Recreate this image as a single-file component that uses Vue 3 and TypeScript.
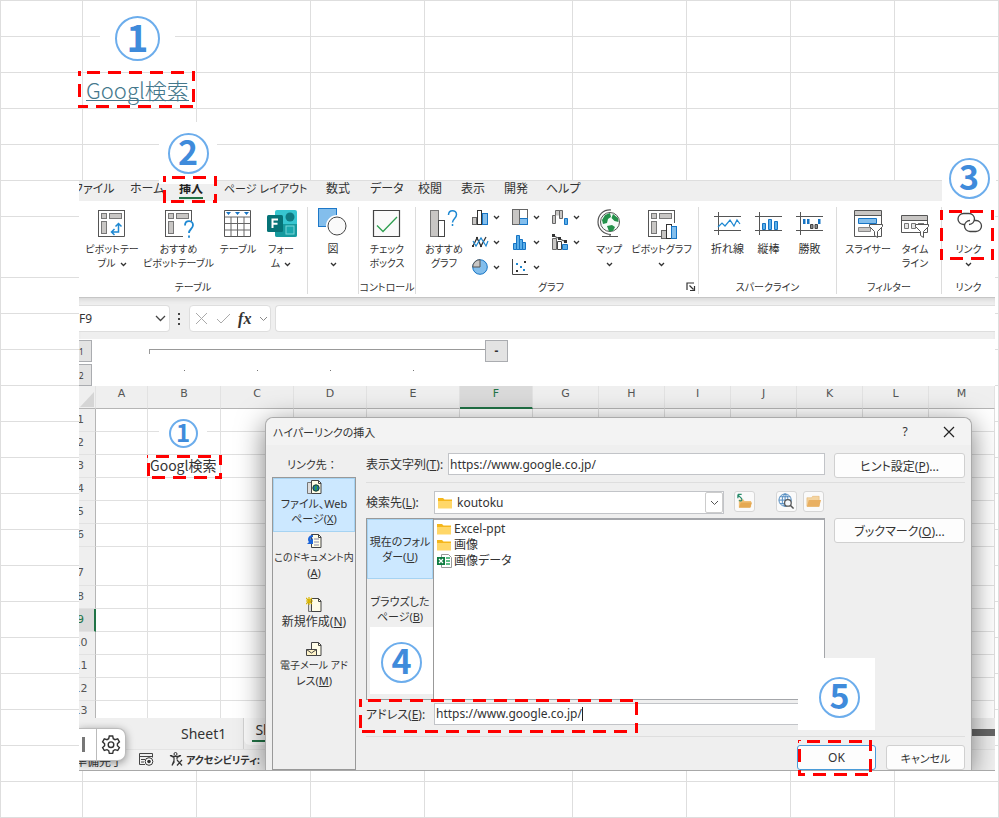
<script setup lang="ts">
import { ref } from 'vue'

interface RibbonItem { icon: string; lines: string[]; chevron?: 'inline' | 'below'; tight?: boolean }
interface Mark { n?: string; size?: number; box: Record<string, string>; kind: 'dash' | 'number' }

const tabs = ['ファイル', 'ホーム', '挿入', 'ページ レイアウト', '数式', 'データ', '校閲', '表示', '開発', 'ヘルプ']
const tableItems: RibbonItem[] = [
  { icon: 'pivot', lines: ['ピボットテー', 'ブル'], chevron: 'inline', tight: true },
  { icon: 'recPivot', lines: ['おすすめ', 'ピボットテーブル'], tight: true },
  { icon: 'table', lines: ['テーブル'], tight: true },
  { icon: 'forms', lines: ['フォー', 'ム'], chevron: 'inline', tight: true },
]
const miniCharts = ['column', 'tree', 'waterfall', 'line', 'histogram', 'combo', 'pie', 'scatter']
const sparkItems: RibbonItem[] = [
  { icon: 'sparkLine', lines: ['折れ線'] },
  { icon: 'sparkBar', lines: ['縦棒'] },
  { icon: 'sparkWin', lines: ['勝敗'] },
]
const filterItems: RibbonItem[] = [
  { icon: 'slicer', lines: ['スライサー'], tight: true },
  { icon: 'timeline', lines: ['タイム', 'ライン'], tight: true },
]
const groups: { key: string; title: string; items: RibbonItem[] }[] = [
  { key: 'tables', title: 'テーブル', items: tableItems },
  { key: 'shapes', title: '', items: [{ icon: 'shapes', lines: ['図'], chevron: 'below' }] },
  { key: 'controls', title: 'コントロール', items: [{ icon: 'check', lines: ['チェック', 'ボックス'], tight: true }] },
  { key: 'charts', title: 'グラフ', items: [{ icon: 'recChart', lines: ['おすすめ', 'グラフ'], tight: true }] },
  { key: 'sparks', title: 'スパークライン', items: sparkItems },
  { key: 'filters', title: 'フィルター', items: filterItems },
  { key: 'links', title: 'リンク', items: [{ icon: 'link', lines: ['リンク'], chevron: 'below', tight: true }] },
]
const mapItems: RibbonItem[] = [
  { icon: 'globe', lines: ['マップ'], chevron: 'below' },
  { icon: 'pivotChart', lines: ['ピボットグラフ'], chevron: 'below' },
]

const columns = ['A', 'B', 'C', 'D', 'E', 'F', 'G', 'H', 'I', 'J', 'K', 'L', 'M']
const rows = [1, 2, 3, 4, 5, 6, 7, 8, 9, 10, 11, 12, 13]
const linkTo = [
  { icon: 'docWeb', a: 'ファイル、Web', b: 'ページ', key: 'X' },
  { icon: 'docHere', a: 'このドキュメント内', b: '', key: 'A' },
  { icon: 'docNew', a: '', b: '新規作成', key: 'N' },
  { icon: 'docMail', a: '電子メール アド', b: 'レス', key: 'M' },
]
const files = [
  { icon: 'folder', name: 'Excel-ppt' },
  { icon: 'folder', name: '画像' },
  { icon: 'excel', name: '画像データ' },
]
const cellRef = ref('F9')
const formula = ref('')
const display = ref('https://www.google.co.jp/')
const address = ref('https://www.google.co.jp/')

const px = (o: Record<string, number>) => Object.fromEntries(Object.entries(o).map(([k, v]) => [k, `${v}px`]))
const marks: Mark[] = [
  { kind: 'number', n: '1', size: 44, box: px({ left: 100, top: 15, width: 75, height: 47 }) },
  { kind: 'dash', box: px({ left: 78, top: 71, width: 117, height: 37 }) },
  { kind: 'number', n: '2', size: 41, box: px({ left: 159, top: 122, width: 58, height: 62 }) },
  { kind: 'dash', box: px({ left: 163, top: 176, width: 54, height: 27 }) },
  { kind: 'number', n: '3', size: 41, box: px({ right: 3, top: 152, width: 54, height: 52 }) },
  { kind: 'dash', box: px({ right: 5, top: 210, width: 54, height: 50 }) },
  { kind: 'number', n: '1', size: 29, box: px({ left: 159, top: 418, width: 48, height: 31 }) },
  { kind: 'dash', box: px({ left: 147, top: 455, width: 75, height: 24 }) },
  { kind: 'number', n: '4', size: 41, box: px({ left: 370, top: 627, width: 63, height: 67, paddingTop: 3 }) },
  { kind: 'dash', box: px({ left: 359, top: 699, width: 279, height: 34 }) },
  { kind: 'number', n: '5', size: 41, box: px({ right: 124, top: 658, width: 77, height: 72, paddingTop: 6, paddingLeft: 6 }) },
  { kind: 'dash', box: px({ right: 127, top: 740, width: 74, height: 36 }) },
]

const frame = '<rect x=".5" y=".5" width="26" height="26" fill="#fff" stroke="#555"/><rect x="3.500" y="3.500" width="5" height="5" fill="#c8c6c4" stroke="#777"/><rect x="11.500" y="3.500" width="12" height="5" fill="#c8c6c4" stroke="#777"/><rect x="3.500" y="11.500" width="5" height="12" fill="#c8c6c4" stroke="#777"/>'
const question = '<path d="M20 15.500c0-6 8-5.500 8-.5 0 4-4 4-4 8M24 25.500v2.200" fill="none" stroke="#1e88d2" stroke-width="1.800"/>'
const funnel = (x: number, y: number) => `<path transform="translate(${x} ${y})" d="M.5.5h13v2l-5 5v6l-3-2v-4l-5-5z" fill="#fff" stroke="#555"/>`
const page = '<path d="M5.500 1.500h7l2.500 2.500v10.500h-9.500z" fill="#fffde8" stroke="#444"/><path d="M12.500 1.500v3H15" fill="none" stroke="#444"/>'
const icons: Record<string, string> = {
  pivot: frame + '<path d="M12 12h15v15H12z" fill="#fff"/><path d="M26.500 9v17.500H9" fill="none" stroke="#555"/><path d="M14 22h6.500v-8M16.500 19l-3 3 3 3M17.500 16.500l3-3 3 3" fill="none" stroke="#1e88d2" stroke-width="1.500"/>',
  recPivot: frame + '<path d="M18 11h10v17H18z" fill="#fff"/>' + question,
  table: '<path d="M.5.5h26v26H.5z" fill="#fff" stroke="#555"/><path d="M.5 7h26M.5 13.500h26M.5 20h26M7 7v19.500M13.500 7v19.500M20 7v19.500" stroke="#666"/><path d="M2 2h5L4.500 5zM11 2h5l-2.500 3zM20 2h5l-2.500 3z" fill="#1674c4"/>',
  forms: '<rect x="8" y="0" width="22" height="27" rx="2" fill="#37c6d0"/><path d="M8 14h22v11a2 2 0 0 1-2 2H10a2 2 0 0 1-2-2z" fill="#169a9e"/><circle cx="23" cy="7" r="4.500" fill="#107c83"/><rect x="19" y="16" width="8" height="8" fill="#1aa8ae" stroke="#78d5d8"/><rect x="0" y="5" width="16" height="17" rx="1.500" fill="#067377"/><path d="M5.500 18V9.500h5.500M5.500 13.700h5" fill="none" stroke="#fff" stroke-width="2"/>',
  shapes: '<rect x="-.5" y="-1.500" width="18" height="18" fill="#83beec" stroke="#1e78c8"/><circle cx="18" cy="16" r="9.500" fill="#fff" stroke="#fff" stroke-width="3"/><circle cx="18" cy="16" r="9" fill="#fafafa" stroke="#444"/>',
  check: '<path d="M.5.5h26v26H.5z" fill="#fafafa" stroke="#444" stroke-width="1.200"/><path d="M4 15.500l6 6L24 7" fill="none" stroke="#2e9e4f" stroke-width="1.300"/>',
  recChart: '<rect x=".5" y=".5" width="8" height="26" fill="#c8c6c4" stroke="#777"/><rect x="8.500" y="10.500" width="6" height="16" fill="#fff" stroke="#444"/><path d="M18.500 5c0-6 8-5.500 8-.5 0 4-4 4.500-4 8M22.500 14v2" fill="none" stroke="#1e88d2" stroke-width="1.500"/>',
  globe: '<circle cx="15" cy="12" r="9.500" fill="#f5fbf8" stroke="#555"/><path d="M10 5l5-2 1 4-3 2-1 4-4 1-1-4zM18 4l5 4 .5 4-4-1-3-3zM12 16l5-1 3 2-2 4-4 .5z" fill="#23914a"/><path d="M16 0C8-.5 3 5 3 12s6 12.500 13 12.500M15 24v2.500M7 26.500h16" fill="none" stroke="#555" stroke-width="1.200"/>',
  pivotChart: frame + '<path d="M13 13h15v16H13z" fill="#fff"/><rect x="13.500" y="20.500" width="5" height="8" fill="#c8c6c4" stroke="#666"/><rect x="18.500" y="14.500" width="5" height="14" fill="#fff" stroke="#333"/><rect x="23.500" y="16.500" width="5" height="12" fill="#83beec" stroke="#1674c4"/>',
  sparkLine: '<path d="M0 6.500h27M0 20.500h27M4.500 2v23" stroke="#555"/><path d="M4 17l4-4 3 3 5-6 4 6 3-6 3 4" fill="none" stroke="#1e88d2" stroke-width="1.200"/>',
  sparkBar: '<path d="M0 6.500h27M0 20.500h27M4.500 2v23" stroke="#555"/><path d="M7.500 13.500h3v6h-3zM13.500 9.500h3v10h-3zM19.500 11.500h3v8h-3z" fill="#5aaee8" stroke="#1674c4"/>',
  sparkWin: '<path d="M0 6.500h27M0 20.500h27M4.500 2v23" stroke="#555"/><path d="M7 9h2.500v5H7zM11 9h2.500v5H11zM22 9h2.500v5H22z" fill="#1674c4"/><path d="M14.500 14.500h2.500v4h-2.500zM19 14.500h2.500v4H19z" fill="#888" stroke="#444"/>',
  slicer: '<path d="M.5.500h27v26H.5z" fill="#fff" stroke="#555"/><path d="M1 1h26v5H1z" fill="#c8c6c4"/><path d="M.5 5.500h27" stroke="#555"/><path d="M4.500 8.500h18v5h-18z" fill="#83beec" stroke="#1674c4"/><path d="M4.500 17.500h12v4h-12z" fill="#c8c6c4" stroke="#888"/>' + funnel(15, 14),
  timeline: '<path d="M.5 5.500h26v17H.5z" fill="#fff" stroke="#555"/><path d="M1 6h25v4H1z" fill="#c8c6c4"/><path d="M.5 10.500h26" stroke="#555"/><path d="M3.500 13.500h4v5h-4zM10.500 13.500h4v5h-4z" fill="#e6e6e6" stroke="#777"/><path d="M17 13.500h6" stroke="#777"/>' + funnel(14, 14),
  link: '<path d="M9.500 14.500H8.500a5.500 5.500 0 0 1 0-11h5.500a5.500 5.500 0 0 1 0 11M18.500 10.500h2.500a5.500 5.500 0 0 1 0 11h-6a5.500 5.500 0 0 1 0-11" fill="none" stroke="#444" stroke-width="1.300"/>',
  column: '<rect x=".5" y="8.500" width="4" height="7" fill="#c8c6c4" stroke="#666"/><rect x="5.500" y="1.500" width="4" height="14" fill="#fff" stroke="#333"/><rect x="10.500" y="4.500" width="5" height="11" fill="#83beec" stroke="#1674c4"/>',
  tree: '<rect x=".5" y=".5" width="15" height="15" fill="#fff" stroke="#666"/><path d="M1 1h6v14H1z" fill="#c8c6c4"/><path d="M7.500 9.500h8v6h-8z" fill="#83beec" stroke="#1674c4"/><path d="M7.500 1v14" stroke="#666"/>',
  waterfall: '<path d="M.5 14.500v-8h3v8zM3.500 6.500v-5h4v5M7.500 1.500h3v8h-3z" fill="#c8c6c4" stroke="#666"/><path d="M12.500 9.500h3v6h-3z" fill="#5aaee8" stroke="#1674c4"/>',
  line: '<path d="M1 12l4-8 4 8 5-9" fill="none" stroke="#333" stroke-width="1.300"/><path d="M1 7l3 5 5-8 5 8 2-5" fill="none" stroke="#1e88d2" stroke-width="1.200"/><path d="M4 3h2v2H4zM0 11h2v2H0zM8 11h2v2H8z" fill="#333"/>',
  histogram: '<path d="M1.500 15.500v-6h3v6zM4.500 15.500v-14h3v14zM7.500 15.500V5.500h3v10zM10.500 15.500v-7h3v7z" fill="#5aaee8" stroke="#1674c4"/>',
  combo: '<path d="M.5 15.500V4.500h4v11z" fill="#c8c6c4" stroke="#666"/><path d="M5.500 15.500v-8h4v8z" fill="#fff" stroke="#444"/><path d="M10.500 15.500v-5h5v5z" fill="#5aaee8" stroke="#1674c4"/><path d="M1 1.500l12 6" stroke="#333"/><path d="M0 0h3v3H0zM6 3h3v3H6zM12 6h3v3h-3z" fill="#333"/>',
  pie: '<circle cx="8" cy="8" r="7.300" fill="#83beec" stroke="#1674c4"/><path d="M8 8V.7A7.300 7.300 0 0 0 .7 8z" fill="#c8c6c4" stroke="#555"/>',
  scatter: '<path d="M.5 0v15.500H16" fill="none" stroke="#444"/><path d="M4 4h2v2H4zM8 7h2v2H8zM11 10h2v2h-2z" fill="#1e88d2"/><path d="M12 2h2v2h-2zM4 11h2v2H4z" fill="#333"/>',
  docWeb: '<path d="M1.500 3.500h4v11h-4z" fill="#ddd" stroke="#777"/>' + page + '<circle cx="10" cy="9" r="3.200" fill="#1b6fb5" stroke="#17431c"/><path d="M9 7h2v4H9z" fill="#2e9e4f"/>',
  docHere: page + '<path d="M8 6h5M8 9h5M8 12h5" stroke="#88a"/><path d="M7 2C2 2 1 7 3 9L1 11h6V5L5 7C4 6 5 4 7 4z" fill="#1c64d8"/>',
  docNew: '<path d="M2.500 4.500h4v10h-4z" fill="#ddd" stroke="#777"/>' + page + '<path d="M3 0v8M-1 4h8M0 1l6 6M6 1L0 7" stroke="#d8b400" stroke-width="1.200"/>',
  docMail: page + '<path d="M.5 8.500h10v6H.5z" fill="#fff4c8" stroke="#444"/><path d="M.5 8.500l5 3.500 5-3.500" fill="none" stroke="#444"/>',
  folder: '<path d="M1 3h5l1.500 1.500H15V13H1z" fill="#f5b71c"/><path d="M1 6h14v7.500H1z" fill="#ffd768"/>',
  excel: '<path d="M5.500 1.500h7l3 3v10h-10z" fill="#fff" stroke="#999"/><path d="M10 5h4M10 8h4M10 11h4" stroke="#5fbf88" stroke-width="2"/><rect x="1" y="4" width="8" height="8" fill="#107c41"/><path d="M3 6l4 4M7 6l-4 4" stroke="#fff" stroke-width="1.300"/>',
  up: '<path d="M3 7h5l1 1.500h7V15H3z" fill="#f0c078"/><path d="M5 10h12l-2 5.500H3z" fill="#e5a952"/><path d="M2 1.500h4M2 1.500v4M2 2l4 4c1 2-1 3-3 2" fill="none" stroke="#2a8c6c" stroke-width="1.300"/>',
  web: '<circle cx="7.500" cy="7.500" r="6.500" fill="#fff" stroke="#4a86bd"/><path d="M1 7.500h13M7.500 1v13M2 4h11M2 11h11" stroke="#4a86bd"/><ellipse cx="7.500" cy="7.500" rx="3" ry="6.500" fill="none" stroke="#4a86bd"/><circle cx="10.500" cy="10.500" r="3.500" fill="#f4f8fc" stroke="#555" stroke-width="1.300"/><path d="M13 13l3.500 3.500" stroke="#555" stroke-width="1.600"/>',
  open: '<path d="M2 5h5l1-1.500h7V14H2z" fill="#f4d4a0" stroke="#e0ad60" stroke-width=".5"/><path d="M4 7.500h13L15 14.500H2z" fill="#e9b062"/>',
  gear: '<path d="M8.300 1h3.400l.6 2.700 1.700 1 2.700-.8 1.700 2.900-2 1.900v2l2 1.900-1.700 2.900-2.700-.8-1.700 1-.6 2.700H8.300l-.6-2.700-1.700-1-2.700.8-1.700-2.900 2-1.900v-2l-2-1.900 1.700-2.900 2.700.8 1.700-1z" fill="#fff" stroke="#333" stroke-width="1.400"/><circle cx="10" cy="9.700" r="2.800" fill="none" stroke="#333" stroke-width="1.400"/>',
  macro: '<path d="M6 12.500H.5V1.500h13v4M.5 4.500h13M2 7.500h4M2 10h3" fill="none" stroke="#444"/><circle cx="10" cy="9.500" r="3.800" fill="#fff" stroke="#333"/><circle cx="10" cy="9.500" r="1.800" fill="#333"/>',
  access: '<circle cx="6.500" cy="2" r="1.500" fill="none" stroke="#333"/><path d="M1 3.500l4 2v3l-2 5M12 3.500l-4 2v2M3 13.500l2.500-4M8 8l5 5.500M13 8l-5 5.500M1 3.500l4.500 1h2l4.500-1" fill="none" stroke="#333" stroke-width="1.200"/>',
}
</script>

<template>
  <main class="canvas">
    <div class="backdrop">
      <div v-for="r in 22" :key="r" class="line" :class="{ tall: r === 7 }">
        <div v-for="c in 9" :key="c" class="box">
          <a v-if="r === 3 && c === 2" class="cell-link" href="https://www.google.co.jp/">Googl検索</a>
        </div>
      </div>
    </div>

    <section class="excel">
      <nav class="tabs">
        <a v-for="(t, i) in tabs" :key="t" href="#" :class="{ first: i === 0, on: t === '挿入', tight: i === 3 }">{{ t }}</a>
      </nav>

      <div class="ribbon">
        <div v-for="g in groups" :key="g.key" class="group" :class="g.key">
          <div class="items">
            <button v-for="it in g.items" :key="it.icon" type="button" class="big" :class="{ tight: it.tight }">
              <svg width="30" height="30" viewBox="-1 0 30 30" v-html="icons[it.icon]" />
              <span v-for="(l, i) in it.lines" :key="l" class="cap">{{ l }}<svg v-if="it.chevron === 'inline' && i === it.lines.length - 1" class="chev after" width="7" height="5" viewBox="0 0 7 5"><path d="M1 1l2.500 2.500L6 1" /></svg></span>
              <span v-if="it.chevron === 'below'" class="cap"><svg class="chev" width="7" height="5" viewBox="0 0 7 5"><path d="M1 1l2.500 2.500L6 1" /></svg></span>
            </button>
            <div v-if="g.key === 'charts'" class="minis">
              <button v-for="m in miniCharts" :key="m" type="button" class="mini" :aria-label="m">
                <svg width="17" height="17" viewBox="0 0 17 17" v-html="icons[m]" />
                <svg class="chev after" width="7" height="5" viewBox="0 0 7 5"><path d="M1 1l2.500 2.500L6 1" /></svg>
              </button>
            </div>
            <template v-if="g.key === 'charts'">
              <button v-for="it in mapItems" :key="it.icon" type="button" class="big tight">
                <svg width="30" height="30" viewBox="-1 0 30 30" v-html="icons[it.icon]" />
                <span class="cap">{{ it.lines[0] }}</span>
                <span class="cap"><svg class="chev" width="7" height="5" viewBox="0 0 7 5"><path d="M1 1l2.500 2.500L6 1" /></svg></span>
              </button>
            </template>
          </div>
          <div class="title tight">
            <span>{{ g.title }}</span>
            <svg v-if="g.key === 'charts'" width="10" height="10" viewBox="0 0 10 10"><path d="M1 8V1h7M3.500 3.500l4 4M8.500 4v4.500H4" fill="none" stroke="#333" stroke-width="1.200" /></svg>
          </div>
        </div>
      </div>

      <div class="formula">
        <label class="name"><input v-model="cellRef" aria-label="名前ボックス"><svg width="11" height="7" viewBox="0 0 11 7"><path d="M1 1l4.500 4.500L10 1" fill="none" stroke="#444" stroke-width="1.300" /></svg></label>
        <svg class="dots" width="4" height="14" viewBox="0 0 4 14"><path d="M1 1h2v2H1zM1 6h2v2H1zM1 11h2v2H1z" fill="#444" /></svg>
        <div class="fx">
          <svg width="13" height="13" viewBox="0 0 13 13"><path d="M1 1l11 11M12 1L1 12" stroke="#aaa" /></svg>
          <svg width="15" height="11" viewBox="0 0 15 11"><path d="M1 6l4 4L14 1" fill="none" stroke="#aaa" /></svg>
          <i>fx</i>
          <svg width="9" height="6" viewBox="0 0 9 6"><path d="M1 1l3.500 3.500L8 1" fill="none" stroke="#888" /></svg>
        </div>
        <input v-model="formula" class="bar" aria-label="数式バー">
      </div>

      <div class="outline">
        <div class="levels"><button type="button">1</button><button type="button">2</button></div>
        <div class="bracket"><div class="rule" /><div class="points"><i /><i /><i /><i /></div></div>
        <button type="button" class="minus">-</button>
      </div>

      <table class="sheet">
        <colgroup><col class="c0"><col v-for="c in columns" :key="c" :class="'c' + c"></colgroup>
        <thead>
          <tr><th class="corner"><svg width="15" height="17" viewBox="0 0 15 17"><path d="M14 1v15H0z" fill="#d5d5d5" /></svg></th><th v-for="c in columns" :key="c" :class="{ on: c === 'F' }">{{ c }}</th></tr>
        </thead>
        <tbody>
          <tr v-for="r in rows" :key="r" :class="{ high: r === 7, cut: r === 13 }">
            <th :class="{ on: r === 9 }"><div class="num"><span>{{ r }}</span></div></th>
            <td v-for="c in columns" :key="c">{{ r === 3 && c === 'B' ? 'Googl検索' : '' }}</td>
          </tr>
        </tbody>
      </table>

      <div class="sheets">
        <button type="button" class="plain">Sheet1</button>
        <button type="button" class="active"><span>Sheet2</span></button>
        <div class="scroll"><div /></div>
      </div>
      <footer class="status">
        <span class="ready">準備完了</span>
        <svg width="15" height="15" viewBox="0 0 15 15" v-html="icons.macro" />
        <svg class="acc" width="14" height="15" viewBox="0 0 14 15" v-html="icons.access" />
        <b class="tight">アクセシビリティ:</b>
      </footer>
      <div class="float"><span /><button type="button" aria-label="設定"><svg width="20" height="20" viewBox="0 0 20 20" v-html="icons.gear" /></button></div>

      <form class="dialog" @submit.prevent>
        <header>
          <span class="compact">ハイパーリンクの挿入</span>
          <button type="button">?</button>
          <button type="button" aria-label="閉じる"><svg width="12" height="12" viewBox="0 0 12 12"><path d="M1 1l10 10M11 1L1 11" stroke="#222" stroke-width="1.200" /></svg></button>
        </header>
        <div class="body">
          <div class="left">
            <span class="heading compact">リンク先 ：</span>
            <div class="targets">
              <button v-for="(l, i) in linkTo" :key="l.key" type="button" :class="{ on: i === 0, long: i === 1, short: i === 2 }">
                <svg width="17" height="17" viewBox="0 0 17 17" v-html="icons[l.icon]" />
                <span v-if="l.a" :class="i === 0 ? 'compact' : 'tight'">{{ l.a }}</span>
                <span :class="{ compact: i !== 2 }">{{ l.b }}(<u>{{ l.key }}</u>)</span>
              </button>
            </div>
          </div>
          <div class="main">
            <div class="row">
              <label class="wide" for="disp">表示文字列(<u>T</u>):</label>
              <input id="disp" v-model="display" class="text">
              <button type="button" class="push">ヒント設定(<u>P</u>)...</button>
            </div>
            <hr>
            <div class="row look">
              <label for="look">検索先(<u>L</u>):</label>
              <div class="combo">
                <svg width="16" height="16" viewBox="0 0 16 16" v-html="icons.folder" />
                <select id="look"><option>koutoku</option></select>
                <span><svg width="9" height="6" viewBox="0 0 9 6"><path d="M1 1l3.500 3.500L8 1" fill="none" stroke="#555" /></svg></span>
              </div>
              <button v-for="b in ['up', 'web', 'open']" :key="b" type="button" class="tool" :class="b" :aria-label="b"><svg width="17" height="17" viewBox="0 0 18 18" v-html="icons[b]" /></button>
            </div>
            <div class="row browse">
              <div class="places compact">
                <button type="button" class="on">現在のフォル<br>ダー(<u>U</u>)</button>
                <button type="button">ブラウズした<br>ページ(<u>B</u>)</button>
              </div>
              <ul>
                <li v-for="f in files" :key="f.name"><svg width="16" height="16" viewBox="0 0 16 16" v-html="icons[f.icon]" />{{ f.name }}</li>
              </ul>
              <button type="button" class="push">ブックマーク(<u>O</u>)...</button>
            </div>
            <div class="row addr">
              <label for="addr">アドレス(<u>E</u>):</label>
              <div class="text"><input id="addr" v-model="address"><i /></div>
            </div>
            <hr class="low">
            <div class="row actions">
              <button type="submit" class="push ok">OK</button>
              <button type="button" class="push cancel compact">キャンセル</button>
            </div>
          </div>
        </div>
      </form>
    </section>

    <template v-for="(m, i) in marks" :key="i">
      <div v-if="m.kind === 'number'" class="patch" :style="m.box"><span class="num" :class="'s' + m.size">{{ m.n }}</span></div>
      <svg v-else class="dash" :style="m.box"><rect width="100%" height="100%" /></svg>
    </template>
  </main>
</template>

<style>
body { margin: 0; background: #fff; }
</style>

<style scoped>
* { box-sizing: border-box; }
.canvas { position: relative; display: grid; font-family: "Noto Sans", "Noto Sans CJK JP", sans-serif; font-size: 12px; color: #333; font-feature-settings: "palt"; overflow: hidden; }
button, input, select { font: inherit; font-feature-settings: inherit; color: inherit; margin: 0; padding: 0; border: 0; background: none; border-radius: 0; outline: none; min-width: 0; }
a { color: inherit; text-decoration: none; }
svg { flex: none; }
.backdrop, .excel { grid-area: 1 / 1; }
.backdrop { border: solid #dedede; border-width: 1px 0 0 1px; }
.line { display: grid; grid-template-columns: 82px 114fr 114fr 114fr 148fr 114fr 104fr 104fr 104fr; height: 36px; }
.line.tall { height: 61px; }
.box { border: solid #dedede; border-width: 0 1px 1px 0; display: flex; align-items: flex-start; padding: 4px 0 0 3px; white-space: nowrap; }
.cell-link { font: 22px/24px "Noto Sans CJK JP", sans-serif; font-weight: 300; color: #44788c; border-bottom: 1px solid #44788c; height: 24px; }

.excel { position: relative; margin: 181px 4px 47px 79px; background: #fff; height: 590px; overflow: hidden; border-bottom: 1px solid #a8a8a8; }
.tabs { height: 20px; background: #efefef; display: grid; grid-template-columns: 51px 49px 45px 102px 44px 48px 43px 43px 42px 60px; line-height: 15px; white-space: nowrap; }
.compact, .tabs .tight { font-size: 11px; }
.tabs .first { margin-left: -6px; }
.tabs .on { font-weight: 700; color: #222; border-bottom: 2px solid #217346; justify-self: start; height: 18px; }

.ribbon { height: 96px; display: grid; grid-template-columns: 229fr 51fr 57fr 283fr 138fr 105fr 53fr; background: #fff; font-size: 11px; }
.tight { font-size: 10px; }
.group { position: relative; border-right: 1px solid #dcdcdc; margin: 6px 0 3px; display: flex; flex-direction: column; min-width: 0; }
.group.links { border: 0; }
.items { flex: 1; padding-top: 3px; display: grid; grid-template-columns: 1fr; }
.tables .items { grid-template-columns: 66px 67px 52px 34px; }
.charts .items { grid-template-columns: 56px 120px 34px 71px; }
.sparks .items { grid-template-columns: 41px 41px 41px; padding-left: 8px; }
.filters .items { grid-template-columns: 62px 32px; }
.big { display: flex; flex-direction: column; align-items: center; white-space: nowrap; }
.big > svg { margin-bottom: 2px; overflow: visible; }
.cap { line-height: 14px; height: 14px; }
.chev { vertical-align: middle; fill: none; stroke: #333; stroke-width: 1.3; }
.chev.after { margin-left: 4px; }
.title { height: 14px; line-height: 14px; display: flex; align-items: center; justify-content: center; white-space: nowrap; }
.title span { flex: 1; display: flex; justify-content: center; }
.charts .title svg { margin-right: 2px; }
.minis { display: grid; grid-template-columns: repeat(3, 40px); grid-auto-rows: 25px; margin-top: -5px; }
.mini { display: flex; align-items: center; }

.formula { height: 42px; background: #efefef; padding: 7px 0 7px; display: flex; border-top: 1px solid #c6c6c6; box-shadow: inset 0 4px 4px -2px #d8d8d8; }
.name, .fx, .bar { background: #fff; border: 1px solid #dedede; border-radius: 4px; height: 27px; }
.name { width: 91px; display: flex; align-items: center; justify-content: space-between; padding-right: 3px; border-left: 0; border-radius: 0 4px 4px 0; }
.name input { width: 60px; }
.dots { margin: 7px 8px 0 7px; }
.fx { width: 82px; display: flex; align-items: center; justify-content: space-between; padding: 0 2px 0 5px; }
.fx i { font: italic bold 16px "Liberation Serif", serif; }
.bar { flex: 1; margin-left: 4px; border-right: 0; border-radius: 4px 0 0 4px; }

.outline { height: 47px; display: flex; background: #fff; align-items: flex-start; padding-top: 1px; }
.levels { width: 13px; display: grid; gap: 2px; }
.levels button { height: 22px; width: 13px; border: 1px solid #aaacb0; border-left: 0; background: #e3e3e3; font-size: 8px; text-align: left; }
.bracket { width: 336px; margin: 9px 0 0 57px; }
.rule { height: 5px; border: solid #999; border-width: 1px 0 0 1px; }
.points { display: flex; gap: 72px; padding: 16px 0 0 35px; }
.points i { width: 1px; height: 1px; background: #777; }
.points i:last-child { margin-left: 10px; }
.minus { width: 23px; height: 22px; background: #e3e3e3; border: 1px solid #aaacb0; font-weight: 700; line-height: 18px; }

.sheet { width: 100%; table-layout: fixed; border-collapse: separate; border-spacing: 0; }
.c0 { width: 17px; } .cA { width: 52px; } .cB, .cC, .cD, .cF { width: 73px; } .cE { width: 93px; }
.sheet th, .sheet td { padding: 0; border: solid #e0e0e0; border-width: 0 1px 1px 0; height: 23px; font-weight: 400; white-space: nowrap; line-height: 16px; overflow: hidden; }
.sheet td { font: 14px/18px "Noto Sans CJK JP", sans-serif; padding: 0 0 2px 2px; }
.sheet th { background: #efefef; color: #555; border-color: #e2e2e2; font-family: "DejaVu Sans", sans-serif; font-size: 11px; }
.sheet thead th { border-bottom-color: #b5b5b5; padding-bottom: 6px; }
.sheet thead th.on { background: #dadada; color: #217346; border-bottom: 2px solid #217346; padding-bottom: 5px; }
.sheet .corner { text-align: right; vertical-align: bottom; padding: 0; line-height: 0; }
.sheet tbody th { border-right-color: #b5b5b5; }
.sheet tbody th.on { background: #dadada; color: #217346; border-right: 2px solid #217346; }
.sheet .num { display: flex; justify-content: center; width: 31px; margin-left: -14px; }
.sheet .high > * { height: 39px; }
.sheet .high th { vertical-align: bottom; padding-bottom: 4px; }
.sheet .cut > * { height: 17px; border-bottom: 0; }
.sheet .cut .num { height: 14px; }

.sheets { height: 31px; display: flex; background: #efefef; }
.plain { width: 165px; padding-left: 102px; text-align: left; font-size: 14px; border-right: 1px solid #d2d2d2; }
.active { width: 60px; padding: 0 0 2px 8px; background: #fafafa; border-radius: 0 0 6px 6px; font-size: 14px; height: 27px; }
.active span { display: block; border-bottom: 2px solid #217346; line-height: 20px; }
.scroll { flex: 1; display: flex; align-items: center; }
.scroll div { flex: 1; height: 7px; background: #666; margin-bottom: 3px; }
.status { height: 22px; background: #f1f1f1; border-top: 1px solid #e4e4e4; display: flex; align-items: center; white-space: nowrap; padding-bottom: 2px; }
.ready { width: 61px; margin-left: -4px; padding-top: 2px; }
.acc { margin: 0 3px 0 15px; }
.status .ready + svg { margin-left: 3px; }
.float { position: absolute; left: 0; top: 547px; width: 47px; height: 33px; background: #fff; border: 1px solid #bbb; border-left: 0; border-radius: 0 8px 8px 0; box-shadow: 0 2px 8px rgba(0, 0, 0, .4); display: flex; align-items: center; }
.float span { width: 3px; height: 15px; background: #777; margin: 0 11px 0 3px; }
.float button { border-left: 1px solid #bbb; height: 31px; padding-left: 4px; display: flex; align-items: center; }

.dialog { position: absolute; left: 186px; right: 23px; top: 236px; height: 353px; background: #efefef; border: 1px solid #aaa; border-bottom: 0; border-radius: 8px 8px 0 0; box-shadow: 0 6px 28px rgba(0, 0, 0, .5); display: flex; flex-direction: column; }
.dialog header { height: 27px; background: #f3f3f3; border-radius: 8px 8px 0 0; display: flex; align-items: center; padding-left: 7px; padding-right: 16px; }
.dialog header span { flex: 1; }
.dialog header button { width: 12px; margin-left: 32px; display: flex; justify-content: center; }
.body { flex: 1; display: grid; grid-template-columns: 84px 1fr; gap: 10px; padding: 0 6px; min-height: 0; }
.left { display: flex; flex-direction: column; min-height: 0; }
.heading { height: 32px; padding: 11px 0 0 15px; white-space: nowrap; }
.targets { flex: 1; border: 1px solid #999; }
.targets button { width: 100%; height: 54px; padding-top: 1px; display: flex; flex-direction: column; align-items: center; line-height: 15px; white-space: nowrap; }
.targets .on { background: #cce8ff; border: 1px solid #a6d3f2; padding-top: 0; }
.targets .long { height: 64px; }
.targets .short { height: 44px; }
.main { padding-top: 8px; min-width: 0; }
.row { display: flex; align-items: flex-start; }
.row label { width: 68px; line-height: 24px; white-space: nowrap; flex: none; }
.row label.wide { width: 82px; }
.text { flex: 1; height: 22px; background: #fff; border: 1px solid #c2c4c8; padding: 0 1px; line-height: 19px; }
.push { width: 131px; height: 25px; margin-left: 9px; background: #fdfdfd; border: 1px solid #d0d0d0; border-radius: 3px; flex: none; }
hr { border: 0; border-top: 1px solid #dedede; margin: 4px 0 8px; }
.look { height: 27px; }
.combo { flex: 1; height: 23px; background: #fff; border: 1px solid #c2c4c8; display: flex; align-items: center; padding-left: 2px; margin-right: 10px; }
.combo select { flex: 1; appearance: none; padding-left: 4px; }
.combo span { width: 18px; height: 21px; border: 1px solid #ccc; border-radius: 2px; display: flex; align-items: center; justify-content: center; }
.tool { width: 21px; height: 21px; background: #fafafa; border: 1px solid #d6d6d6; border-radius: 3px; display: flex; align-items: center; justify-content: center; }
.web { margin-left: 21px; }
.open { margin: 0 141px 0 6px; }
.browse { height: 182px; align-items: stretch; }
.places { width: 68px; border: 1px solid #999; }
.places button { width: 100%; height: 60px; line-height: 15px; white-space: nowrap; }
.places .on { background: #cce8ff; border: 1px solid #a6d3f2; }
.browse ul { flex: 1; margin: 0; padding: 1px 0 0 2px; list-style: none; background: #fff; border: 1px solid #a4a6aa; border-top-width: 2px; border-left: 0; }
.browse li { display: flex; align-items: center; gap: 2px; height: 16px; line-height: 16px; }
.addr { margin-top: 3px; }
.addr .text { display: flex; align-items: center; margin-right: 140px; }
.addr input { field-sizing: content; height: 20px; line-height: 20px; }
.addr i { width: 1px; height: 14px; background: #222; }
.low { margin: 9px 0 8px; }
.actions { justify-content: flex-end; }
.ok { width: 79px; border-color: #4a9bd8; }
.cancel { width: 79px; margin-left: 10px; }

.patch { position: absolute; background: #fff; display: flex; align-items: center; justify-content: center; }
.patch .num { flex: none; display: flex; align-items: center; justify-content: center; padding-bottom: 4px; border: 2px solid #6cadec; border-radius: 50%; color: #3f8bdb; font-weight: 700; font-family: "Noto Sans CJK JP", sans-serif; }
.s44 { width: 45px; height: 45px; font-size: 37px; line-height: 37px; }
.s41 { width: 41px; height: 41px; font-size: 34px; line-height: 34px; }
.s29 { width: 29px; height: 29px; font-size: 24px; line-height: 24px; }
.dash { position: absolute; overflow: hidden; }
.dash rect { fill: none; stroke: #f00; stroke-width: 6; stroke-dasharray: 13 8; stroke-dashoffset: -9; }
</style>
